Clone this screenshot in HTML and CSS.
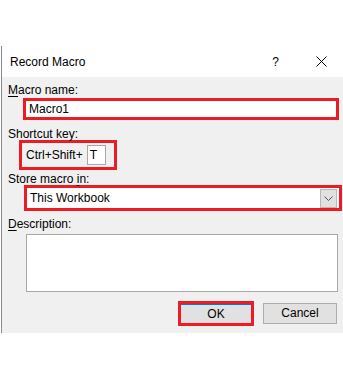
FILE: index.html
```html
<!DOCTYPE html>
<html lang="en">
<head>
<meta charset="utf-8">
<title>Record Macro</title>
<link rel="stylesheet" href="styles.css">
</head>
<body>
<div class="dialog">
  <div class="titlebar">
    <span class="title">Record Macro</span>
    <span class="help">?</span>
    <svg class="close" width="11" height="11" viewBox="0 0 11 11"><path d="M0.5 0.5 L10.5 10.5 M10.5 0.5 L0.5 10.5" stroke="#000" stroke-width="1" fill="none"/></svg>
  </div>
  <div class="content">
    <div class="lbl lbl-name"><u>M</u>acro name:</div>
    <div class="field name hl">Macro1</div>
    <div class="lbl lbl-key">Shortcut key:</div>
    <div class="shortcut hl"><span>Ctrl+Shift+</span><span class="key">T</span></div>
    <div class="lbl lbl-store">Store macro <u>i</u>n:</div>
    <div class="select hl">
      <span class="sel-text">This Workbook</span>
      <span class="arrow"><svg width="9" height="5" viewBox="0 0 9 5"><path d="M0.5 0.5 L4.5 4.5 L8.5 0.5" stroke="#555" stroke-width="1" fill="none"/></svg></span>
    </div>
    <div class="lbl lbl-desc"><u>D</u>escription:</div>
    <div class="desc"></div>
    <div class="buttons">
      <div class="btn-ok hl"><div class="btn-ok-inner">OK</div></div>
      <div class="btn-cancel">Cancel</div>
    </div>
  </div>
</div>
</body>
</html>
```
FILE: styles.css
```css
html, body {
  margin: 0;
  padding: 0;
  background: #ffffff;
  overflow: hidden;
}
body {
  width: 343px;
  height: 380px;
  font-family: "Segoe UI", "Liberation Sans", Arial, sans-serif;
  font-size: 12px;
  color: #000;
}
.dialog {
  margin-top: 46px;
  margin-left: 1px;
  width: 342px;
  border-left: 1px solid #8a8a8a;
  box-sizing: border-box;
}
.titlebar {
  height: 31px;
  background: #ffffff;
  display: flex;
  align-items: center;
  padding-left: 8px;
  padding-top: 1px;
  box-sizing: border-box;
}
.title {
  flex: 1;
  line-height: 15px;
}
.help {
  line-height: 15px;
  margin-right: 37px;
}
.close {
  display: block;
  margin-right: 16px;
  margin-top: -1px;
}
.content {
  background: #f0f0f0;
  height: 256px;
  padding: 6px 0 0 6px;
  box-sizing: border-box;
}
.lbl {
  line-height: 15px;
  height: 15px;
}
.lbl u {
  text-underline-offset: 2px;
}
.hl {
  border: 3px solid #ed1c24;
  box-sizing: border-box;
}
.field.name {
  margin-left: 15px;
  width: 316px;
  height: 22px;
  background: #fff;
  padding-left: 3px;
  line-height: 16px;
}
.lbl-key {
  margin-top: 7px;
}
.shortcut {
  margin-top: -2px;
  margin-left: 11px;
  width: 98px;
  height: 30px;
  display: flex;
  align-items: center;
  padding-left: 4px;
  line-height: 15px;
}
.key {
  margin-left: 4px;
  width: 19px;
  height: 20px;
  box-sizing: border-box;
  border: 1px solid #a8a8a8;
  background: #fff;
  padding-left: 2px;
  line-height: 18px;
}
.lbl-store {
  margin-top: 2px;
}
.select {
  margin-top: -2px;
  margin-left: 16px;
  width: 318px;
  height: 26px;
  background: #fff;
  display: flex;
  padding-left: 3px;
}
.sel-text {
  flex: 1;
  line-height: 20px;
}
.arrow {
  width: 17px;
  height: 19px;
  margin: 1px 2px 0 0;
  box-sizing: border-box;
  border: 1px solid #b8b8b8;
  background: #e1e1e1;
  display: flex;
  align-items: center;
  justify-content: center;
}
.arrow svg {
  display: block;
}
.lbl-desc {
  margin-top: 6px;
}
.desc {
  margin-top: 2px;
  margin-left: 18px;
  width: 312px;
  height: 58px;
  box-sizing: border-box;
  border: 1px solid #a8a8a8;
  background: #fff;
}
.buttons {
  margin-top: 9px;
  display: flex;
  align-items: center;
  justify-content: flex-end;
  gap: 9px;
  padding-right: 6px;
}
.btn-ok {
  width: 76px;
  height: 25px;
  background: #e1e1e1;
}
.btn-ok-inner {
  height: 100%;
  box-sizing: border-box;
  border-top: 1px solid #0078d7;
  text-align: center;
  line-height: 18px;
}
.btn-cancel {
  width: 74px;
  height: 21px;
  box-sizing: border-box;
  border: 1px solid #adadad;
  background: #e1e1e1;
  text-align: center;
  line-height: 19px;
}
```
